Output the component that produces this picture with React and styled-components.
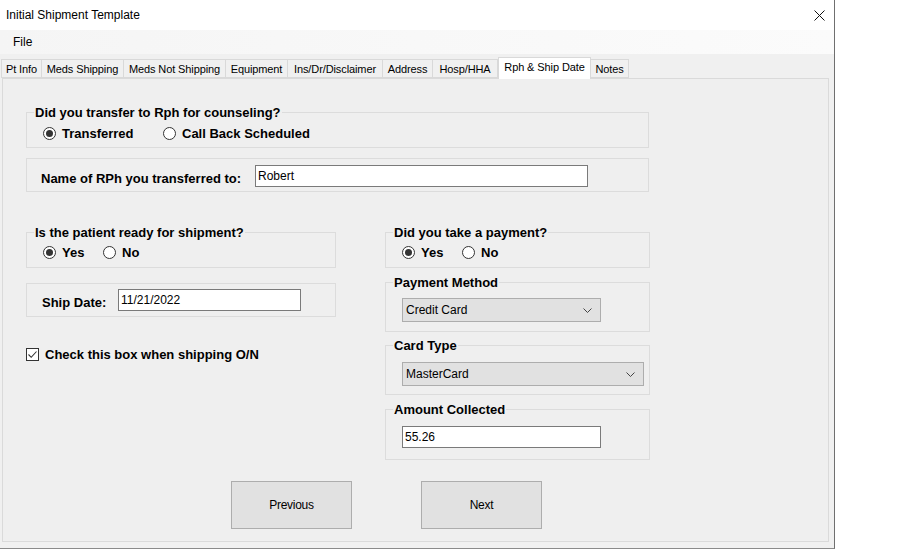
import styled, { createGlobalStyle } from "styled-components";

const GlobalStyle = createGlobalStyle`
  html, body {
    margin: 0;
    padding: 0;
    background: #ffffff;
  }
  body {
    font-family: "Liberation Sans", Arial, sans-serif;
    color: #000;
  }
`;

const Screen = styled.div`
  width: 912px;
  height: 551px;
  display: flex;
  background: #ffffff;
  overflow: hidden;
`;

const Window = styled.div`
  width: 834px;
  height: 548px;
  display: flex;
  flex-direction: column;
  background: #f0f0f0;
  border-right: 1px solid #6f6f6f;
  border-bottom: 1px solid #8a8a8a;
`;

const TitleBar = styled.div`
  height: 30px;
  flex-shrink: 0;
  display: flex;
  align-items: center;
  justify-content: space-between;
  padding: 0 9px 0 6px;
  background: #ffffff;
  font-size: 12px;
`;

const MenuBar = styled.div`
  height: 24px;
  flex-shrink: 0;
  display: flex;
  align-items: center;
  padding-left: 13px;
  font-size: 12px;
  background: linear-gradient(to right, #f5f5f5, #fbfbfb);
`;

const TabStrip = styled.div`
  height: 24px;
  flex-shrink: 0;
  display: flex;
  align-items: flex-end;
  padding-left: 1px;
  position: relative;
  z-index: 1;
`;

const Tab = styled.div`
  width: ${({ $w }) => $w}px;
  height: ${({ $active }) => ($active ? 22 : 19)}px;
  box-sizing: border-box;
  margin-bottom: ${({ $active }) => ($active ? -1 : 0)}px;
  display: flex;
  align-items: center;
  justify-content: center;
  font-size: 11px;
  letter-spacing: -0.1px;
  background: ${({ $active }) => ($active ? "#ffffff" : "#f0f0f0")};
  border: 1px solid #d9d9d9;
  border-bottom: ${({ $active }) => ($active ? "none" : "1px solid #d9d9d9")};
  border-left: ${({ $first, $active }) =>
    $first || $active ? "1px solid #d9d9d9" : "none"};
  padding-bottom: ${({ $active }) => ($active ? 3 : 0)}px;
`;

const TabPage = styled.div`
  flex: 1;
  margin: 0 5px 6px 2px;
  border: 1px solid #dadada;
  background: #efefef;
  display: flex;
  flex-direction: column;
  padding-left: 23px;
`;

const GroupBox = styled.fieldset`
  margin: ${({ $mt }) => $mt}px 0 0 0;
  padding: 0;
  min-width: 0;
  width: ${({ $w }) => $w}px;
  box-sizing: border-box;
  border: 1px solid #dcdcdc;
`;

const Legend = styled.legend`
  margin-left: 7px;
  padding: 0 1px;
  font-size: 13px;
  font-weight: bold;
  line-height: 15px;
`;

const PlainBox = styled.div`
  margin-top: ${({ $mt }) => $mt}px;
  width: ${({ $w }) => $w}px;
  box-sizing: border-box;
  border: 1px solid #dcdcdc;
  display: flex;
  align-items: center;
  padding: ${({ $pt }) => $pt}px 0 ${({ $pb }) => $pb}px ${({ $pl }) => $pl}px;
`;

const FieldLabel = styled.span`
  width: ${({ $w }) => $w}px;
  flex-shrink: 0;
  font-size: 13px;
  font-weight: bold;
  padding-top: 4px;
`;

const TextInput = styled.div`
  width: ${({ $w }) => $w}px;
  height: 22px;
  box-sizing: border-box;
  border: 1px solid #7a7a7a;
  background: #ffffff;
  font-size: 12px;
  display: flex;
  align-items: center;
  padding-left: 2px;
  margin: ${({ $m }) => $m || "0"};
`;

const ComboBox = styled.div`
  width: ${({ $w }) => $w}px;
  height: 24px;
  box-sizing: border-box;
  border: 1px solid #adadad;
  background: #e1e1e1;
  font-size: 12px;
  display: flex;
  align-items: center;
  justify-content: space-between;
  padding: 0 8px 0 3px;
  margin: ${({ $m }) => $m};
`;

const RadioRow = styled.div`
  display: flex;
  align-items: center;
  height: 16px;
  padding-left: 16px;
  margin: ${({ $m }) => $m};
`;

const RadioItem = styled.label`
  width: ${({ $w }) => $w}px;
  display: flex;
  align-items: center;
  gap: 6px;
  font-size: 13px;
  font-weight: bold;
`;

const RadioCircle = styled.span`
  width: 13px;
  height: 13px;
  box-sizing: border-box;
  border: 1px solid #333333;
  border-radius: 50%;
  background: #ffffff;
  display: flex;
  align-items: center;
  justify-content: center;

  &::after {
    content: "";
    width: 7px;
    height: 7px;
    border-radius: 50%;
    background: ${({ $on }) => ($on ? "#333333" : "transparent")};
  }
`;

const Columns = styled.div`
  display: flex;
  gap: 49px;
  margin-top: 33px;
`;

const Column = styled.div`
  width: ${({ $w }) => $w}px;
  display: flex;
  flex-direction: column;
`;

const CheckRow = styled.label`
  margin-top: 30px;
  display: flex;
  align-items: center;
  gap: 6px;
  font-size: 13px;
  font-weight: bold;
`;

const CheckBox = styled.span`
  width: 13px;
  height: 13px;
  box-sizing: border-box;
  border: 1px solid #333333;
  background: #ffffff;
  display: flex;
  align-items: center;
  justify-content: center;
`;

const ButtonRow = styled.div`
  display: flex;
  gap: 69px;
  margin: 21px 0 0 205px;
`;

const Button = styled.button`
  width: 121px;
  height: 48px;
  border: 1px solid #adadad;
  background: #e1e1e1;
  font-family: "Liberation Sans", Arial, sans-serif;
  font-size: 12px;
  letter-spacing: -0.3px;
  color: #000;
  padding: 0;
`;

const tabs = [
  { label: "Pt Info", w: 41 },
  { label: "Meds Shipping", w: 82 },
  { label: "Meds Not Shipping", w: 102 },
  { label: "Equipment", w: 62 },
  { label: "Ins/Dr/Disclaimer", w: 95 },
  { label: "Address", w: 50 },
  { label: "Hosp/HHA", w: 65 },
  { label: "Rph & Ship Date", w: 93, active: true },
  { label: "Notes", w: 38 },
];

const Chevron = () => (
  <svg width="9" height="5" viewBox="0 0 9 5">
    <path d="M0.5 0.5 L4.5 4.5 L8.5 0.5" fill="none" stroke="#444" strokeWidth="1" />
  </svg>
);

const Radio = ({ label, on, w }) => (
  <RadioItem $w={w}>
    <RadioCircle $on={on} />
    {label}
  </RadioItem>
);

const App = () => {
  return (
    <Screen>
      <GlobalStyle />
      <Window>
        <TitleBar>
          <span>Initial Shipment Template</span>
          <svg width="11" height="11" viewBox="0 0 11 11">
            <path d="M0.5 0.5 L10.5 10.5 M10.5 0.5 L0.5 10.5" stroke="#111" strokeWidth="1" />
          </svg>
        </TitleBar>
        <MenuBar>File</MenuBar>
        <TabStrip>
          {tabs.map((t, i) => (
            <Tab key={t.label} $w={t.w} $active={t.active} $first={i === 0}>
              {t.label}
            </Tab>
          ))}
        </TabStrip>

        <TabPage>
          <GroupBox $mt={26} $w={623}>
            <Legend>Did you transfer to Rph for counseling?</Legend>
            <RadioRow $m="5px 0 6px 0">
              <Radio label="Transferred" on w={120} />
              <Radio label="Call Back Scheduled" />
            </RadioRow>
          </GroupBox>

          <PlainBox $mt={10} $w={623} $pt={6} $pb={4} $pl={14}>
            <FieldLabel $w={214}>Name of RPh you transferred to:</FieldLabel>
            <TextInput $w={333}>Robert</TextInput>
          </PlainBox>

          <Columns>
            <Column $w={310}>
              <GroupBox $mt={0} $w={310}>
                <Legend>Is the patient ready for shipment?</Legend>
                <RadioRow $m="4px 0 7px 0">
                  <Radio label="Yes" on w={60} />
                  <Radio label="No" />
                </RadioRow>
              </GroupBox>

              <PlainBox $mt={15} $w={310} $pt={5} $pb={5} $pl={15}>
                <FieldLabel $w={76}>Ship Date:</FieldLabel>
                <TextInput $w={183}>11/21/2022</TextInput>
              </PlainBox>

              <CheckRow>
                <CheckBox>
                  <svg width="11" height="11" viewBox="0 0 11 11">
                    <path d="M1.5 5.5 L4.2 8.3 L9.5 2.5" fill="none" stroke="#333" strokeWidth="1.1" />
                  </svg>
                </CheckBox>
                Check this box when shipping O/N
              </CheckRow>
            </Column>

            <Column $w={265}>
              <GroupBox $mt={0} $w={265}>
                <Legend>Did you take a payment?</Legend>
                <RadioRow $m="4px 0 7px 0">
                  <Radio label="Yes" on w={60} />
                  <Radio label="No" />
                </RadioRow>
              </GroupBox>

              <GroupBox $mt={7} $w={265}>
                <Legend>Payment Method</Legend>
                <ComboBox $w={199} $m="8px 0 9px 16px">
                  <span>Credit Card</span>
                  <Chevron />
                </ComboBox>
              </GroupBox>

              <GroupBox $mt={6} $w={265}>
                <Legend>Card Type</Legend>
                <ComboBox $w={242} $m="9px 0 8px 16px">
                  <span>MasterCard</span>
                  <Chevron />
                </ComboBox>
              </GroupBox>

              <GroupBox $mt={7} $w={265}>
                <Legend>Amount Collected</Legend>
                <TextInput $w={199} $m="9px 0 11px 16px">
                  55.26
                </TextInput>
              </GroupBox>
            </Column>
          </Columns>

          <ButtonRow>
            <Button>Previous</Button>
            <Button>Next</Button>
          </ButtonRow>
        </TabPage>
      </Window>
    </Screen>
  );
};

export default App;
